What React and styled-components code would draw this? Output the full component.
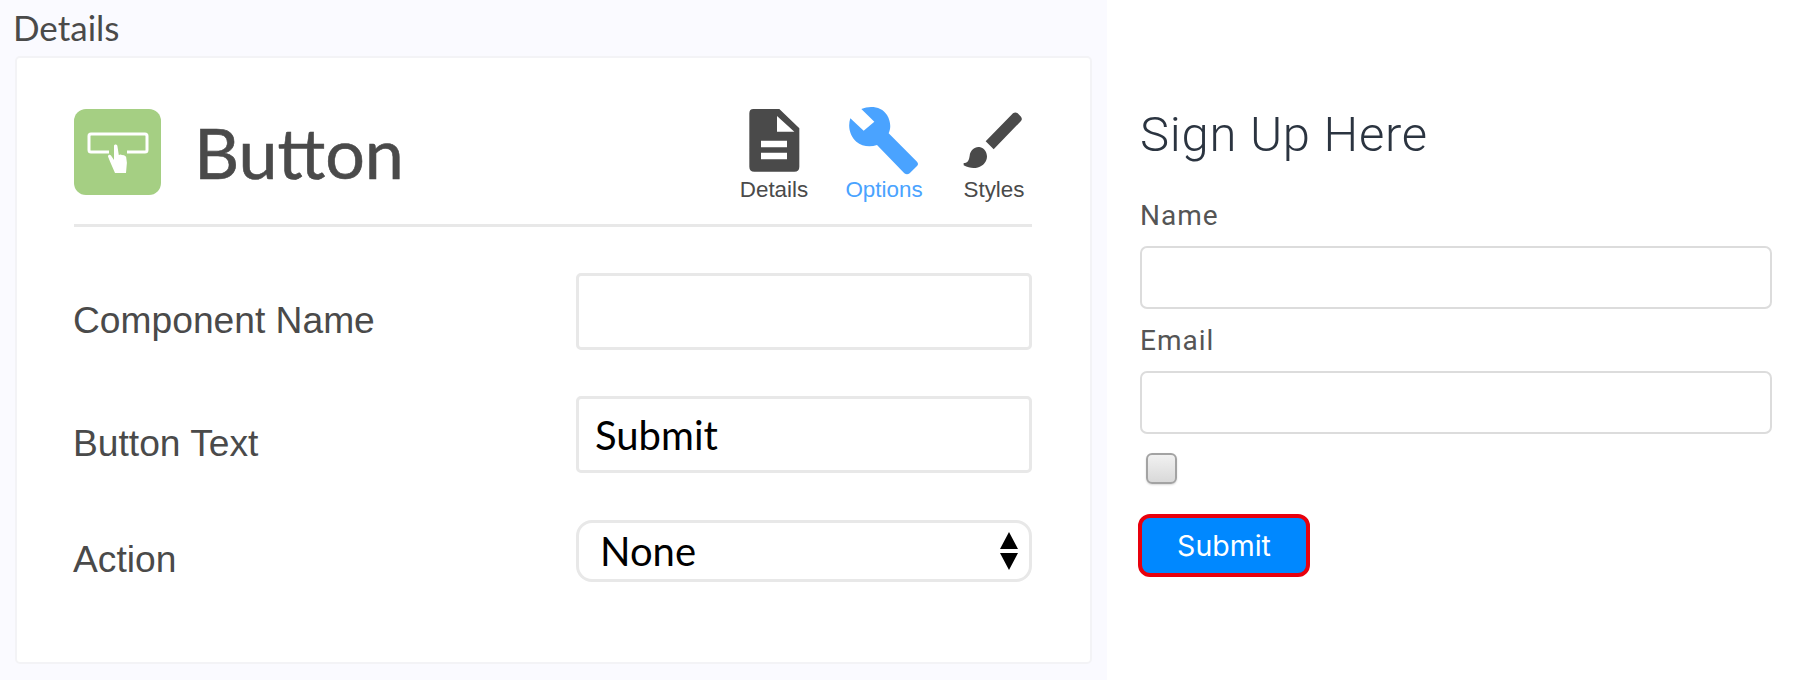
import React from "react";
import styled, { createGlobalStyle } from "styled-components";

const Global = createGlobalStyle`
  html, body { margin: 0; padding: 0; background: #fff; }
  * { box-sizing: border-box; }
`;

const Page = styled.div`
  display: flex;
  width: 1800px;
  height: 680px;
  overflow: hidden;
`;

const EditorPanel = styled.section`
  width: 1107px;
  height: 680px;
  background: #fafaff;
  padding: 0 15px;
`;

const PanelTitle = styled.h2`
  margin: 0 0 0 -2px;
  height: 56px;
  padding-top: 8px;
  font: 400 35px/38px Lato, sans-serif;
  color: #4a4a4a;
`;

const Card = styled.div`
  width: 1077px;
  height: 608px;
  background: #fff;
  border: 2px solid #f3f3f6;
  border-radius: 5px;
  padding: 51px 58px 0 57px;
`;

const CardHeader = styled.header`
  display: flex;
  align-items: flex-start;
  height: 118px;
  border-bottom: 3px solid #e8e8e8;
`;

const BadgeIcon = styled.div`
  width: 87px;
  height: 86px;
  border-radius: 12px;
  background: #a5cf83;
  display: flex;
  align-items: center;
  justify-content: center;
  flex: none;
`;

const CardTitle = styled.h1`
  margin: 0 0 0 33px;
  font: 400 70px/86px Lato, sans-serif;
  -webkit-text-stroke: 0.6px #4a4a4a;
  color: #4a4a4a;
  flex: 1;
`;

const Tabs = styled.nav`
  display: flex;
  align-items: flex-start;
  gap: 34px;
  margin-top: -3px;
`;

const Tab = styled.div`
  display: flex;
  flex-direction: column;
  align-items: center;
  width: 76px;
  white-space: nowrap;
  color: ${(p) => (p.$active ? "#4aa3ff" : "#4a4a4a")};
  font: 400 22.4px/24px "Liberation Sans", Arial, sans-serif;
`;

const TabIcon = styled.svg`
  height: 70px;
  width: 76px;
  display: block;
  margin-bottom: 2px;
  fill: currentColor;
`;

const FormRow = styled.div`
  display: grid;
  grid-template-columns: 502px 456px;
  align-items: center;
  margin-top: ${(p) => p.$top}px;
`;

const RowLabel = styled.label`
  margin-left: -1px;
  padding-top: 16px;
  font: 400 37.2px/40px "Liberation Sans", Arial, sans-serif;
  color: #4a4a4a;
`;

const TextInput = styled.input`
  width: 456px;
  height: 77px;
  border: 3px solid #e8e8e8;
  border-radius: 5px;
  background: #fff;
  padding: 0 16px;
  font: 400 40px Lato, sans-serif;
  color: #000;
  outline: none;
`;

const SelectWrap = styled.div`
  position: relative;
  width: 456px;
  height: 62px;
`;

const Select = styled.select`
  appearance: none;
  width: 100%;
  height: 100%;
  border: 3px solid #e8e8e8;
  border-radius: 16px;
  background: #fff;
  padding: 0 21px;
  font: 400 40px Lato, sans-serif;
  color: #000;
  outline: none;
`;

const Arrows = styled.svg`
  position: absolute;
  right: 13px;
  top: 12px;
  width: 20px;
  height: 38px;
  pointer-events: none;
`;

const FormPanel = styled.section`
  flex: 1;
  padding: 107px 28px 0 33px;
  display: flex;
  flex-direction: column;
  align-items: flex-start;
`;

const SignUpTitle = styled.h2`
  margin: 0 0 37px;
  font: 300 49px/56px Roboto, sans-serif;
  color: #2b3440;
  letter-spacing: 0.75px;
`;

const FieldLabel = styled.label`
  font: 400 28px/32px Roboto, sans-serif;
  color: #555;
  letter-spacing: 1px;
  margin-bottom: 14px;
`;

const FieldInput = styled.input`
  width: 632px;
  height: 63px;
  border: 2px solid #dcdcdc;
  border-radius: 7px;
  background: #fff;
  outline: none;
  margin-bottom: ${(p) => p.$mb}px;
`;

const Check = styled.input`
  appearance: none;
  margin: 0 0 0 6px;
  width: 31px;
  height: 31px;
  border: 2px solid #a3a3a3;
  border-radius: 6px;
  background: linear-gradient(#f1f1f1, #d9d9d9);
  box-shadow: 0 1px 2px rgba(0, 0, 0, 0.15);
`;

const SubmitButton = styled.button`
  margin: 30px 0 0 -2px;
  width: 172px;
  height: 63px;
  background: #0088ff;
  border: 4px solid #e8000d;
  border-radius: 12px;
  color: #fff;
  font: 400 28.5px Inter, sans-serif;
`;

export default function App() {
  return (
    <Page>
      <Global />
      <EditorPanel>
        <PanelTitle>Details</PanelTitle>
        <Card>
          <CardHeader>
            <BadgeIcon>
              <svg width="62" height="46" viewBox="0 0 62 46">
                <path d="M22 23H4a2 2 0 0 1-2-2V7a2 2 0 0 1 2-2h54a2 2 0 0 1 2 2v14a2 2 0 0 1-2 2H40" fill="none" stroke="#fff" strokeWidth="3" />
                <path d="M27 17c0-2 3-2 3.400 0l1.400 9 2-.4 1 .3 2.300.4 2 1.400.8 6-.9 10.300H28l-5-11.500-2-5c0-2 2-2.400 3-1l3 4.500z" fill="#fff" />
              </svg>
            </BadgeIcon>
            <CardTitle>Button</CardTitle>
            <Tabs>
              <Tab>
                <TabIcon viewBox="105 48 228 210">
                  <path fillRule="evenodd" d="M157 57H235L295 115V230Q295 245 280 245H160Q145 245 145 230V70Q145 57 157 57ZM228 78V125H280ZM180 152V172H258V152ZM180 188V208H258V188Z" />
                </TabIcon>
                Details
              </Tab>
              <Tab $active>
                <TabIcon viewBox="437 48 228 210">
                  <path d="M483 57C510 45 545 50 560 75C572 95 572 115 565 130L650 215Q656 222 650 228L628 250Q620 256 612 250L530 165C510 172 485 170 468 155C448 137 442 110 450 85L490 122L522 95Z" />
                </TabIcon>
                Options
              </Tab>
              <Tab>
                <TabIcon viewBox="767 48 228 210">
                  <path d="M938 70Q945 65 952 70L962 80Q967 87 962 93L880 178L856 154ZM790 219C803 219 806 210 808 197C810 180 825 168 840 172C856 176 864 195 858 210C850 232 820 243 790 226Z" />
                </TabIcon>
                Styles
              </Tab>
            </Tabs>
          </CardHeader>
          <FormRow $top={46}>
            <RowLabel>Component Name</RowLabel>
            <TextInput readOnly />
          </FormRow>
          <FormRow $top={46}>
            <RowLabel>Button Text</RowLabel>
            <TextInput readOnly value="Submit" />
          </FormRow>
          <FormRow $top={47}>
            <RowLabel>Action</RowLabel>
            <SelectWrap>
              <Select defaultValue="None">
                <option>None</option>
              </Select>
              <Arrows viewBox="0 0 20 38">
                <path d="M10 0l9 17H1zM1 21h18l-9 17z" fill="#000" />
              </Arrows>
            </SelectWrap>
          </FormRow>
        </Card>
      </EditorPanel>
      <FormPanel>
        <SignUpTitle>Sign Up Here</SignUpTitle>
        <FieldLabel>Name</FieldLabel>
        <FieldInput readOnly $mb={16} />
        <FieldLabel>Email</FieldLabel>
        <FieldInput readOnly $mb={19} />
        <Check type="checkbox" />
        <SubmitButton>Submit</SubmitButton>
      </FormPanel>
    </Page>
  );
}
